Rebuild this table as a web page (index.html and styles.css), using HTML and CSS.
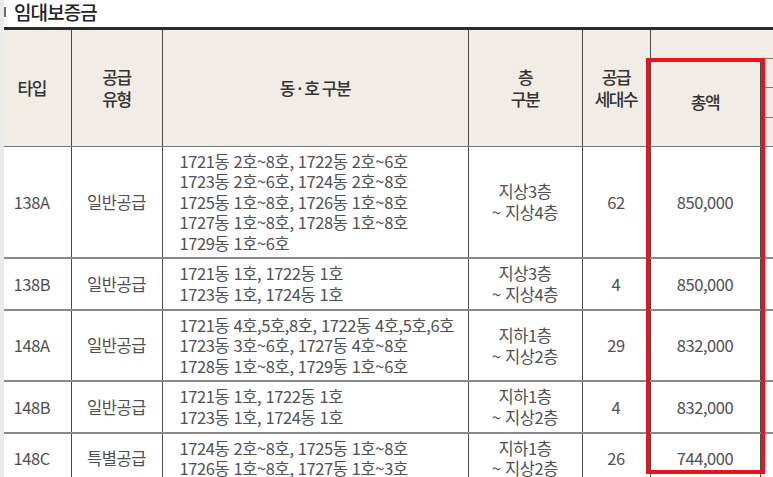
FILE: index.html
```html
<!DOCTYPE html>
<html lang="ko">
<head>
<meta charset="utf-8">
<title>임대보증금</title>
<link rel="stylesheet" href="styles.css">
</head>
<body>
<div class="page">
  <h2 class="title">임대보증금</h2>
  <div class="table-wrap">
    <table class="deposit">
      <colgroup>
        <col class="c-type">
        <col class="c-supply">
        <col class="c-unit">
        <col class="c-floor">
        <col class="c-count">
        <col class="c-total">
        <col class="c-extra">
      </colgroup>
      <thead>
        <tr class="h1">
          <th rowspan="4" class="first">타입</th>
          <th rowspan="4">공급<br>유형</th>
          <th rowspan="4">동 · 호 구분</th>
          <th rowspan="4">층<br>구분</th>
          <th rowspan="4">공급<br>세대수</th>
          <th colspan="2"></th>
        </tr>
        <tr class="h2">
          <th rowspan="3">총액</th>
          <th></th>
        </tr>
        <tr class="h3"><th></th></tr>
        <tr class="h4"><th></th></tr>
      </thead>
      <tbody>
        <tr>
          <td class="first">138A</td>
          <td>일반공급</td>
          <td class="unit">1721동 2호~8호, 1722동 2호~6호<br>1723동 2호~6호, 1724동 2호~8호<br>1725동 1호~8호, 1726동 1호~8호<br>1727동 1호~8호, 1728동 1호~8호<br>1729동 1호~6호</td>
          <td>지상3층<br>~ 지상4층</td>
          <td>62</td>
          <td>850,000</td>
          <td></td>
        </tr>
        <tr>
          <td class="first">138B</td>
          <td>일반공급</td>
          <td class="unit">1721동 1호, 1722동 1호<br>1723동 1호, 1724동 1호</td>
          <td>지상3층<br>~ 지상4층</td>
          <td>4</td>
          <td>850,000</td>
          <td></td>
        </tr>
        <tr>
          <td class="first">148A</td>
          <td>일반공급</td>
          <td class="unit">1721동 4호,5호,8호, 1722동 4호,5호,6호<br>1723동 3호~6호, 1727동 4호~8호<br>1728동 1호~8호, 1729동 1호~6호</td>
          <td>지하1층<br>~ 지상2층</td>
          <td>29</td>
          <td>832,000</td>
          <td></td>
        </tr>
        <tr>
          <td class="first">148B</td>
          <td>일반공급</td>
          <td class="unit">1721동 1호, 1722동 1호<br>1723동 1호, 1724동 1호</td>
          <td>지하1층<br>~ 지상2층</td>
          <td>4</td>
          <td>832,000</td>
          <td></td>
        </tr>
        <tr>
          <td class="first">148C</td>
          <td>특별공급</td>
          <td class="unit">1724동 2호~8호, 1725동 1호~8호<br>1726동 1호~8호, 1727동 1호~3호</td>
          <td>지하1층<br>~ 지상2층</td>
          <td>26</td>
          <td>744,000</td>
          <td></td>
        </tr>
      </tbody>
    </table>
  </div>
  <div class="highlight"></div>
</div>
</body>
</html>
```

FILE: styles.css
```css
html, body {
  margin: 0;
  padding: 0;
  background: #ffffff;
  overflow: hidden;
}

body {
  font-family: "Noto Sans CJK KR", "Noto Sans", sans-serif;
  color: #333;
}

.page {
  position: relative;
  height: 477px;
  border-left: 4px solid #ebebeb;
  overflow: hidden;
}

.title {
  margin: 0;
  height: 27px;
  box-sizing: border-box;
  padding-bottom: 4px;
  display: flex;
  align-items: center;
  font-size: 19px;
  line-height: 20px;
  font-weight: 500;
  letter-spacing: -0.9px;
  color: #222;
}

.title::before {
  content: "";
  width: 2px;
  height: 10px;
  background: #6a6a6a;
  margin-right: 8px;
}

.table-wrap {
  border-top: 3px solid #2b2b2b;
  width: 900px;
}

.deposit {
  border-collapse: collapse;
  table-layout: fixed;
  width: 856px;
}

.c-type { width: 67px; }
.c-supply { width: 91px; }
.c-unit { width: 306px; }
.c-floor { width: 114px; }
.c-count { width: 68px; }
.c-total { width: 110px; }
.c-extra { width: 100px; }

.deposit th,
.deposit td {
  border: 1px solid #4a4a4a;
  padding: 0;
  text-align: center;
  vertical-align: middle;
}

.deposit th {
  background: #f1ede6;
  font-size: 17px;
  font-weight: 500;
  letter-spacing: -1.4px;
  line-height: 22px;
  color: #333;
  border-bottom-color: #777;
}

.deposit thead tr.h1 th { border-top: none; }

.deposit .first {
  border-left: none;
  padding-right: 11px;
}

.deposit tr.h1 { height: 28px; }
.deposit tr.h2 { height: 29px; }
.deposit tr.h3 { height: 30px; }
.deposit tr.h4 { height: 29px; }

.deposit td {
  font-size: 16.5px;
  font-weight: 400;
  letter-spacing: -0.4px;
  line-height: 20.6px;
  color: #505050;
  padding-top: 4px;
  padding-bottom: 4px;
  border-bottom: 2px solid #8a8a8a;
}

.deposit td.unit {
  text-align: left;
  padding-left: 17px;
}

.highlight {
  position: absolute;
  left: 642px;
  top: 58px;
  width: 119px;
  height: 416px;
  box-sizing: border-box;
  border: 4px solid #e8141c;
  pointer-events: none;
}
```
